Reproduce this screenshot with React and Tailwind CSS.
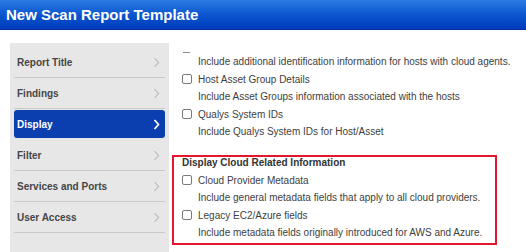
import { useState } from "react";

const navItems = ["Report Title", "Findings", "Display", "Filter", "Services and Ports", "User Access"];

function Chevron({ active }) {
  return (
    <svg width="7" height="11" viewBox="0 0 7 11" className="shrink-0">
      <polyline
        points="1.5,1 5.5,5.5 1.5,10"
        fill="none"
        stroke={active ? "#ffffff" : "#b5b5b5"}
        strokeWidth={active ? 1.8 : 1.1}
      />
    </svg>
  );
}

function Box() {
  return <span className="w-[10px] h-[10px] shrink-0 rounded-[2px] border border-[#7a7a7a] bg-white" />;
}

function CheckRow({ label }) {
  return (
    <div className="h-[17.5px] flex items-center gap-[6px]">
      <Box />
      <span>{label}</span>
    </div>
  );
}

function Desc({ children }) {
  return <div className="h-[17.5px] flex items-center pl-[16px]">{children}</div>;
}

export default function App() {
  const [active, setActive] = useState("Display");

  return (
    <div className="w-[526px] h-[252px] overflow-hidden bg-white font-['Liberation_Sans',Arial,sans-serif]">
      {/* title bar */}
      <header className="h-[30px] flex items-center pl-[6px] bg-gradient-to-b from-[#2a7ce2] via-[#0d55cf] to-[#003bbd] border-b border-[#0a2f8f]">
        <h1 className="text-white font-bold text-[15px] leading-none">New Scan Report Template</h1>
      </header>

      <div className="flex pt-[13px]">
        {/* side nav */}
        <nav className="ml-[10px] w-[159px] h-[209px] bg-[#e7e7e7] px-[4px] pt-[4px]">
          {navItems.map((item) =>
            item === active ? (
              <div key={item} className="h-[31px] py-[1px] pb-[2px]">
                <button className="w-full h-full flex items-center justify-between pl-[3px] pr-[5px] rounded-[3px] bg-[#0b3fb0] text-white font-bold text-[10px]">
                  {item}
                  <Chevron active />
                </button>
              </div>
            ) : (
              <button
                key={item}
                onClick={() => setActive(item)}
                className="w-full h-[31px] flex items-center justify-between pl-[3px] pr-[5px] border-b border-[#c9c9c9] text-[#454545] font-bold text-[10px]"
              >
                {item}
                <Chevron />
              </button>
            )
          )}
        </nav>

        {/* options */}
        <div className="ml-[3px] flex-1 pt-[9px] text-[10px] text-[#3e3e3e]">
          <div className="pl-[10px]">
            <div className="ml-[1px] w-[7px] h-[1px] bg-[#8a8a8a]" />
            <Desc>Include additional identification information for hosts with cloud agents.</Desc>
            <CheckRow label="Host Asset Group Details" />
            <Desc>Include Asset Groups information associated with the hosts</Desc>
            <CheckRow label="Qualys System IDs" />
            <Desc>Include Qualys System IDs for Host/Asset</Desc>
          </div>

          <section className="mt-[14px] w-[325px] border-2 border-[#e3162f] pl-[8px] pb-[1px]">
            <div className="h-[12px] leading-[12px] mb-[3px] font-bold text-[#333]">Display Cloud Related Information</div>
            <CheckRow label="Cloud Provider Metadata" />
            <Desc>Include general metadata fields that apply to all cloud providers.</Desc>
            <CheckRow label="Legacy EC2/Azure fields" />
            <Desc>Include metadata fields originally introduced for AWS and Azure.</Desc>
          </section>
        </div>
      </div>
    </div>
  );
}
